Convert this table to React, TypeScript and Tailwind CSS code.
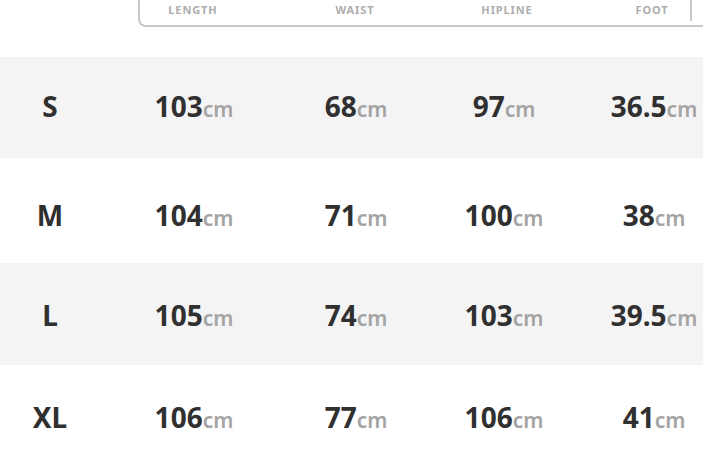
import React from 'react'

type Row = {
  size: string
  length: string
  waist: string
  hip: string
  foot: string
  h: string
}

const rows: Row[] = [
  { size: 'S', length: '103', waist: '68', hip: '97', foot: '36.5', h: 'h-[101px] pb-[3px] bg-[#f5f4f4]' },
  { size: 'M', length: '104', waist: '71', hip: '100', foot: '38', h: 'h-[105px] pt-[9px] bg-white' },
  { size: 'L', length: '105', waist: '74', hip: '103', foot: '39.5', h: 'h-[102px] pt-[2px] bg-[#f5f4f4]' },
  { size: 'XL', length: '106', waist: '77', hip: '106', foot: '41', h: 'h-[98px] pt-[6px] bg-white' },
]

function Value({ n }: { n: string }) {
  return (
    <span className="whitespace-nowrap">
      <span className="text-[28px] font-bold text-[#303030]">{n}</span>
      <span className="text-[21px] font-semibold text-[#a4a4a4]">cm</span>
    </span>
  )
}

export default function App() {
  return (
    <div
      className="w-[703px] h-[463px] overflow-hidden bg-white"
      style={{ fontFamily: '"Noto Sans", "Open Sans", sans-serif' }}
    >
      {/* header tab */}
      <div className="h-[57px]">
        <div className="ml-[138px] h-[27px] w-[620px] border-l-2 border-b-2 border-[#c8c8c8] rounded-bl-[8px] flex items-start text-[11px] font-bold tracking-[0.9px] text-[#adadad]">
          <div className="w-[106px] h-[21px] flex items-center justify-center">LENGTH</div>
          <div className="w-[218px] h-[21px] flex items-center justify-center">WAIST</div>
          <div className="w-[86px] h-[21px] flex items-center justify-center">HIPLINE</div>
          <div className="w-[64px]" />
          <div className="w-[78px] h-[21px] flex items-center justify-center border-r-2 border-[#c8c8c8]">FOOT</div>
        </div>
      </div>

      {/* size rows */}
      {rows.map((r) => (
        <div
          key={r.size}
          className={`grid grid-cols-[100px_188px_136px_160px_140px] items-center leading-none ${r.h}`}
        >
          <div className="text-center text-[28px] font-bold text-[#303030]">{r.size}</div>
          <div className="text-center"><Value n={r.length} /></div>
          <div className="text-center"><Value n={r.waist} /></div>
          <div className="text-center"><Value n={r.hip} /></div>
          <div className="text-center"><Value n={r.foot} /></div>
        </div>
      ))}
    </div>
  )
}
